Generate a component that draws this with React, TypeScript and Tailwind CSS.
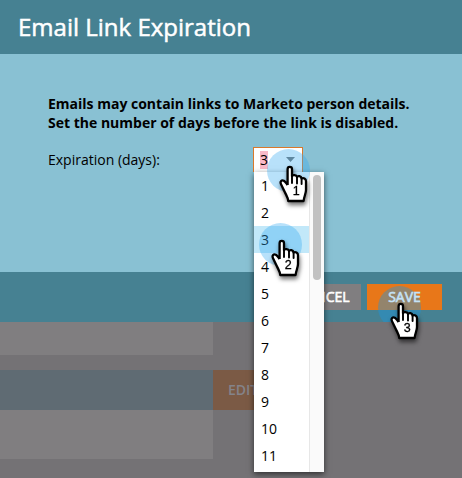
const days = [1, 2, 3, 4, 5, 6, 7, 8, 9, 10, 11];

function Pointer({ step, className }: { step: number; className: string }) {
  return (
    <div className={`pointer-events-none absolute z-20 size-[43px] ${className}`}>
      <div className={`w-full overflow-hidden ${step === 3 ? "h-[36px]" : "h-full"}`}>
        <div className={`size-[43px] rounded-full ${step === 3 ? "bg-[#1c96df]/42" : "bg-[#35aaf2]/35"}`} />
      </div>
      <svg
        className="absolute top-[17px] left-[12px] overflow-visible drop-shadow-[1px_3px_2px_rgba(0,0,0,0.55)]"
        width="30"
        height="37"
        viewBox="0 0 30 37"
      >
        <path
          d="M8.6 19V3.2C8.6 .1 13 .1 13 3.2V10.2C13.4 8.6 17.4 8.7 18 11C18.8 9.5 22 9.8 22.6 12.5C24.4 11.5 27 12.6 27 15.2V24C27 27.5 25 30.5 24.6 35H9.2C9.2 32 7.4 29.5 6 26.5L2 18.2C.7 15.5 2.8 13.6 4.8 14.8C6.4 15.8 7.4 17.5 8.6 19"
          fill="white"
          stroke="black"
          strokeWidth="2.3"
          strokeLinejoin="round"
        />
        <path d="M13 9.5V17M18 11V17.5M22.6 12.5V18" stroke="black" strokeWidth="1.9" strokeLinecap="round" />
        <text
          x="17.3"
          y="29"
          textAnchor="middle"
          fontSize="12.5"
          stroke="black"
          strokeWidth="0.3"
          className="font-['Liberation_Sans',sans-serif]"
        >
          {step}
        </text>
      </svg>
    </div>
  );
}

function DayMenu() {
  return (
    <div className="absolute top-[25px] left-px z-10 flex h-[300px] w-[70px] bg-white shadow-[0_2px_6px_rgba(0,0,0,0.6)]">
      <ul className="w-[55px]">
        {days.map((day) => (
          <li key={day} className={`h-[27px] pl-[7px] leading-[27px] ${day === 3 ? "bg-[#c2e8f9]" : ""}`}>
            {day}
          </li>
        ))}
      </ul>
      <div className="flex flex-1 justify-center border-l border-[#e7e7e7] bg-[#fafafa] pt-[3px]">
        <div className="h-[105px] w-2 rounded-full bg-[#c1c1c1]" />
      </div>
    </div>
  );
}

export default function App() {
  return (
    <main className="relative h-[478px] w-[462px] overflow-hidden bg-[#747275] font-['Open_Sans',sans-serif] text-[14px] text-black">
      <section>
        <header className="h-[54px] bg-[#468192] pl-[18px] text-[24px] leading-[54px] text-white [-webkit-text-stroke:0.5px_white]">
          Email Link Expiration
        </header>
        <div className="h-[218px] bg-[#89c1d3] pt-10 pl-12">
          <div className="font-bold whitespace-nowrap">
            <p className="h-[19px] leading-[19px]">Emails may contain links to Marketo person details.</p>
            <p className="h-[19px] leading-[19px]">Set the number of days before the link is disabled.</p>
          </div>
          <div className="mt-[15px] flex">
            <label className="w-[205px] leading-[25px]">Expiration (days):</label>
            <div className="relative h-[25px] w-[50px]">
              <div className="flex h-full items-center justify-between border border-b-0 border-[#d9792b] bg-white pr-[7px] pl-[6px]">
                <span className="h-[18px] bg-[#f9b9c8] leading-[18px]">3</span>
                <svg className="-mt-0.5" width="9" height="5" viewBox="0 0 9 5">
                  <path d="M0 0H9L4.5 5Z" fill="#777" />
                </svg>
              </div>
              <DayMenu />
            </div>
          </div>
        </div>
        <footer className="flex h-[50px] justify-end gap-[6px] bg-[#468192] pt-3 pr-5 text-white">
          <button className="h-[26px] w-[75px] bg-[#807e80] leading-[26px] [-webkit-text-stroke:0.6px_white]">CANCEL</button>
          <button className="h-[26px] w-[75px] bg-[#e87719] leading-[26px]">
            <span className="relative z-30 text-[#c4e2f7] [-webkit-text-stroke:0.6px_#c4e2f7]">SAVE</span>
          </button>
        </footer>
      </section>
      <section>
        <div className="h-[33px] w-[213px] bg-[#807e80]" />
        <div className="mt-[15px] flex h-10">
          <div className="w-[213px] bg-[#5f6b73]" />
          <div className="w-[60px] bg-[#7b5a45] pl-[15px] leading-10 font-semibold text-[#84838a]">EDIT</div>
        </div>
        <div className="h-[49px] w-[213px] bg-[#807e80]" />
      </section>
      <Pointer step={1} className="top-[149px] left-[267px]" />
      <Pointer step={2} className="top-[223px] left-[259px]" />
      <Pointer step={3} className="top-[286px] left-[378px]" />
    </main>
  );
}
